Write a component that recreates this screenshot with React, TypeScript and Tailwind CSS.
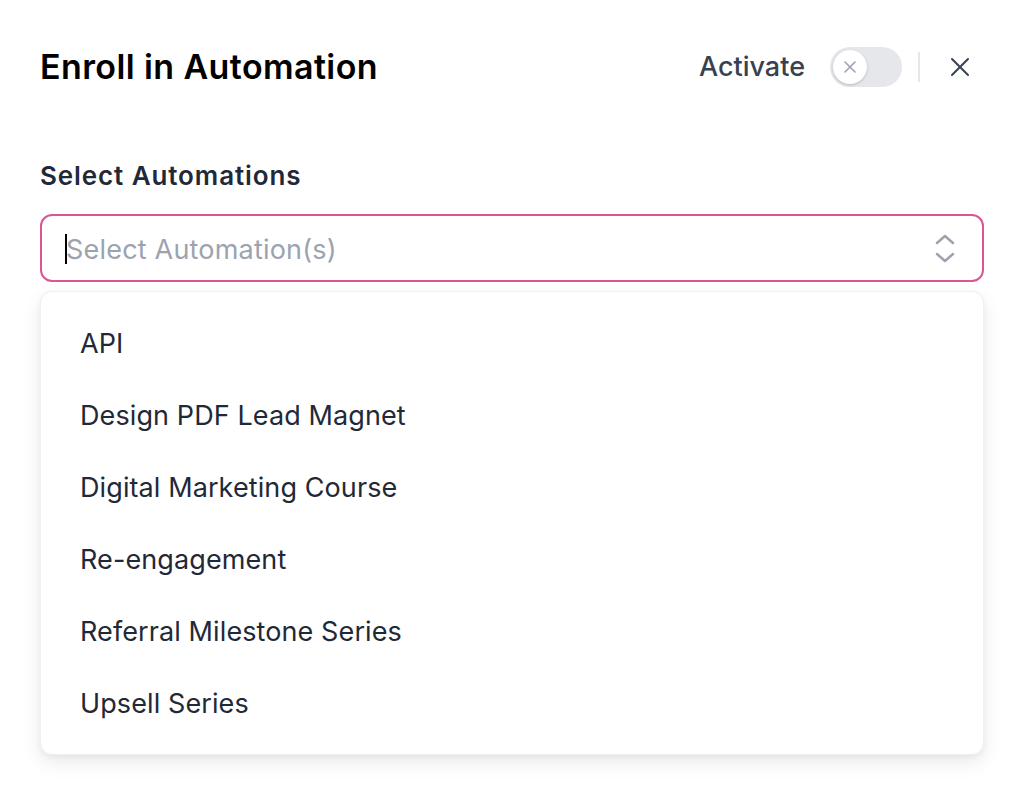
import React from "react";

const items = [
  "API",
  "Design PDF Lead Magnet",
  "Digital Marketing Course",
  "Re-engagement",
  "Referral Milestone Series",
  "Upsell Series",
];

export default function App() {
  return (
    <div
      className="w-[1018px] h-[794px] bg-white pl-[40px] pr-[34px] pt-[40px] overflow-hidden"
      style={{ fontFamily: "Inter, 'Noto Sans', sans-serif" }}
    >
      <div className="flex items-center justify-between h-[54px]">
        <h1 className="text-[34px] leading-[40px] font-semibold text-black tracking-[0.4px]">
          Enroll in Automation
        </h1>
        <div className="flex items-center">
          <span className="text-[27px] font-medium text-[#374151] leading-[32px]">Activate</span>
          <div className="ml-[25px] w-[72px] h-[40px] rounded-full bg-[#e5e7eb] flex items-center px-[3px]">
            <div className="w-[34px] h-[34px] rounded-full bg-white shadow-[0_1px_3px_rgba(0,0,0,0.2)] flex items-center justify-center">
              <svg width="16" height="16" viewBox="0 0 16 16" fill="none" stroke="#9ca3af" strokeWidth="1.6" strokeLinecap="round">
                <path d="M3 3l10 10M13 3L3 13" />
              </svg>
            </div>
          </div>
          <div className="ml-[16px] w-[2px] h-[30px] bg-[#e5e7eb]" />
          <div className="ml-[28px] w-[24px] h-[24px] flex items-center justify-center">
            <svg width="24" height="24" viewBox="0 0 24 24" fill="none" stroke="#374151" strokeWidth="2" strokeLinecap="round">
              <path d="M4 4l16 16M20 4L4 20" />
            </svg>
          </div>
          <div className="w-[12px]" />
        </div>
      </div>

      <div className="mt-[66px] text-[26px] leading-[32px] font-semibold text-[#1f2937] tracking-[0.9px]">
        Select Automations
      </div>

      <div className="mt-[22px] h-[68px] rounded-[12px] border-2 border-[#db5493] flex items-center pl-[24px] pr-[27px]">
        <div className="flex-1 flex items-center relative pt-[3px]">
          <span className="absolute left-[-1px] top-[5px] w-[2px] h-[30px] bg-black" />
          <span className="text-[27px] leading-[36px] text-[#9ca3af] tracking-[0.2px]">Select Automation(s)</span>
        </div>
        <svg width="20" height="32" viewBox="0 0 20 32" fill="none" stroke="#9ca3af" strokeWidth="2.5" strokeLinecap="round" strokeLinejoin="round">
          <path d="M2 11l8-7 8 7M2 22l8 7 8-7" />
        </svg>
      </div>

      <div className="mt-[9px] rounded-[12px] border border-[#f0f0f0] bg-white shadow-[0_8px_20px_rgba(0,0,0,0.08),0_2px_6px_rgba(0,0,0,0.05)] pt-[16px] pb-[14px]">
        {items.map((it) => (
          <div key={it} className="h-[72px] flex items-center pl-[39px] text-[27px] text-[#1f2937] tracking-[0.1px]">
            {it}
          </div>
        ))}
      </div>
    </div>
  );
}
